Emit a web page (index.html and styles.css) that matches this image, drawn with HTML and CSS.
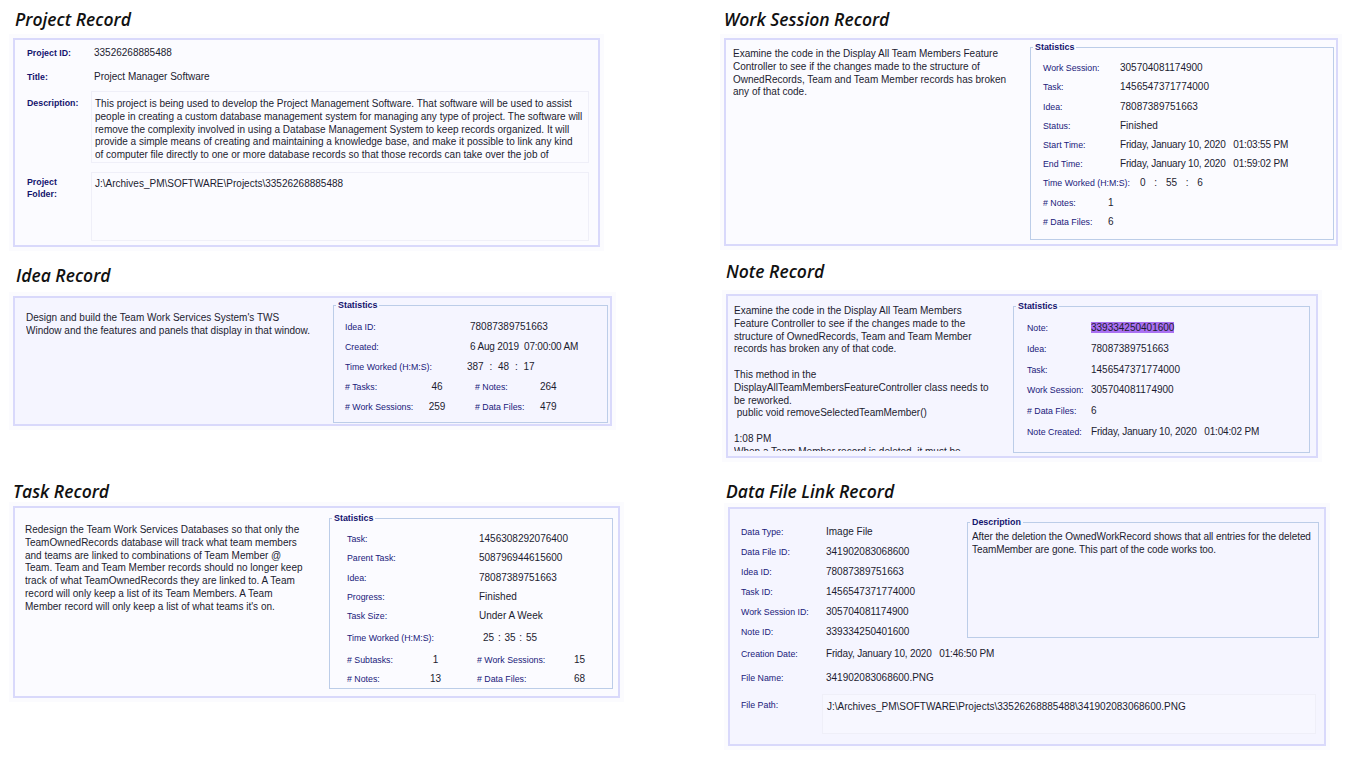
FILE: index.html
```html
<!DOCTYPE html>
<html lang="en">
  <head>
    <meta charset="UTF-8" />
    <title>Record Windows</title>
    <link rel="stylesheet" href="styles.css">
  </head>
  <body>
    <div class="sheet">
      <div class="col col-left">
        <section class="record rec-project">
          <h2>Project Record</h2>
          <div class="panel">
            <div class="pair pair-id"><span class="lbl-bold">Project ID:</span><span>33526268885488</span></div>
            <div class="pair pair-title"><span class="lbl-bold">Title:</span><span>Project Manager Software</span></div>
            <div class="pair pair-box pair-desc">
              <span class="lbl-bold">Description:</span>
              <div class="box box-desc">This project is being used to develop the Project Management Software. That software will be used to assist people in creating a custom database management system for managing any type of project. The software will remove the complexity involved in using a Database Management System to keep records organized. It will provide a simple means of creating and maintaining a knowledge base, and make it possible to link any kind of computer file directly to one or more database records so that those records can take over the job of</div>
            </div>
            <div class="pair pair-box pair-folder">
              <span class="lbl-bold">Project<br>Folder:</span>
              <div class="box box-folder">J:\Archives_PM\SOFTWARE\Projects\33526268885488</div>
            </div>
          </div>
        </section>

        <section class="record rec-idea">
          <h2>Idea Record</h2>
          <div class="panel split">
            <p class="body-text">Design and build the Team Work Services System's TWS Window and the features and panels that display in that window.</p>
            <fieldset class="stats">
              <legend>Statistics</legend>
              <div class="row"><span class="lbl">Idea ID:</span><span>78087389751663</span></div>
              <div class="row"><span class="lbl">Created:</span><span class="date">6 Aug 2019&nbsp; 07:00:00 AM</span></div>
              <div class="row"><span class="lbl">Time Worked (H:M:S):</span><span class="hms">387 : 48 : 17</span></div>
              <div class="row row-pair"><span class="lbl"># Tasks:</span><span class="num">46</span><span class="lbl lbl-two"># Notes:</span><span>264</span></div>
              <div class="row row-pair"><span class="lbl"># Work Sessions:</span><span class="num">259</span><span class="lbl lbl-two"># Data Files:</span><span>479</span></div>
            </fieldset>
          </div>
        </section>

        <section class="record rec-task">
          <h2>Task Record</h2>
          <div class="panel split">
            <p class="body-text">Redesign the Team Work Services Databases so that only the TeamOwnedRecords database will track what team members and teams are linked to combinations of Team Member @ Team. Team and Team Member records should no longer keep track of what TeamOwnedRecords they are linked to. A Team record will only keep a list of its Team Members. A Team Member record will only keep a list of what teams it's on.</p>
            <fieldset class="stats">
              <legend>Statistics</legend>
              <div class="row"><span class="lbl">Task:</span><span>1456308292076400</span></div>
              <div class="row"><span class="lbl">Parent Task:</span><span>508796944615600</span></div>
              <div class="row"><span class="lbl">Idea:</span><span>78087389751663</span></div>
              <div class="row"><span class="lbl">Progress:</span><span>Finished</span></div>
              <div class="row"><span class="lbl">Task Size:</span><span>Under A Week</span></div>
              <div class="row row-tall"><span class="lbl">Time Worked (H:M:S):</span><span class="hms">25 : 35 : 55</span></div>
              <div class="row row-pair row-tall"><span class="lbl"># Subtasks:</span><span class="num">1</span><span class="lbl lbl-two"># Work Sessions:</span><span>15</span></div>
              <div class="row row-pair"><span class="lbl"># Notes:</span><span class="num">13</span><span class="lbl lbl-two"># Data Files:</span><span>68</span></div>
            </fieldset>
          </div>
        </section>
      </div>

      <div class="col col-right">
        <section class="record rec-session">
          <h2>Work Session Record</h2>
          <div class="panel split">
            <p class="body-text">Examine the code in the Display All Team Members Feature Controller to see if the changes made to the structure of OwnedRecords, Team and Team Member records has broken any of that code.</p>
            <fieldset class="stats">
              <legend>Statistics</legend>
              <div class="row"><span class="lbl">Work Session:</span><span>305704081174900</span></div>
              <div class="row"><span class="lbl">Task:</span><span>1456547371774000</span></div>
              <div class="row"><span class="lbl">Idea:</span><span>78087389751663</span></div>
              <div class="row"><span class="lbl">Status:</span><span>Finished</span></div>
              <div class="row"><span class="lbl">Start Time:</span><span class="date">Friday, January 10, 2020&nbsp;&nbsp; 01:03:55 PM</span></div>
              <div class="row"><span class="lbl">End Time:</span><span class="date">Friday, January 10, 2020&nbsp;&nbsp; 01:59:02 PM</span></div>
              <div class="row"><span class="lbl">Time Worked (H:M:S):</span><span class="hms">0 : 55 : 6</span></div>
              <div class="row row-short"><span class="lbl"># Notes:</span><span>1</span></div>
              <div class="row row-short"><span class="lbl"># Data Files:</span><span>6</span></div>
            </fieldset>
          </div>
        </section>

        <section class="record rec-note">
          <h2>Note Record</h2>
          <div class="panel split">
            <p class="body-text">Examine the code in the Display All Team Members Feature Controller to see if the changes made to the structure of OwnedRecords, Team and Team Member records has broken any of that code.<br><br>This method in the DisplayAllTeamMembersFeatureController class needs to be reworked.<br>&nbsp;public void removeSelectedTeamMember()<br><br>1:08 PM<br>When a Team Member record is deleted, it must be</p>
            <fieldset class="stats">
              <legend>Statistics</legend>
              <div class="row"><span class="lbl">Note:</span><span><span class="picked">339334250401600</span></span></div>
              <div class="row"><span class="lbl">Idea:</span><span>78087389751663</span></div>
              <div class="row"><span class="lbl">Task:</span><span>1456547371774000</span></div>
              <div class="row"><span class="lbl">Work Session:</span><span>305704081174900</span></div>
              <div class="row"><span class="lbl"># Data Files:</span><span>6</span></div>
              <div class="row"><span class="lbl">Note Created:</span><span class="date">Friday, January 10, 2020&nbsp;&nbsp; 01:04:02 PM</span></div>
            </fieldset>
          </div>
        </section>

        <section class="record rec-file">
          <h2>Data File Link Record</h2>
          <div class="panel">
            <div class="file-top">
              <div class="file-rows">
                <div class="row"><span class="lbl">Data Type:</span><span>Image File</span></div>
                <div class="row"><span class="lbl">Data File ID:</span><span>341902083068600</span></div>
                <div class="row"><span class="lbl">Idea ID:</span><span>78087389751663</span></div>
                <div class="row"><span class="lbl">Task ID:</span><span>1456547371774000</span></div>
                <div class="row"><span class="lbl">Work Session ID:</span><span>305704081174900</span></div>
                <div class="row"><span class="lbl">Note ID:</span><span>339334250401600</span></div>
              </div>
              <fieldset class="stats">
                <legend>Description</legend>
                <p class="body-text">After the deletion the OwnedWorkRecord shows that all entries for the deleted TeamMember are gone. This part of the code works too.</p>
              </fieldset>
            </div>
            <div class="row row-date"><span class="lbl">Creation Date:</span><span class="date">Friday, January 10, 2020&nbsp;&nbsp; 01:46:50 PM</span></div>
            <div class="row row-name"><span class="lbl">File Name:</span><span>341902083068600.PNG</span></div>
            <div class="row-path">
              <span class="lbl">File Path:</span>
              <div class="box box-path">J:\Archives_PM\SOFTWARE\Projects\33526268885488\341902083068600.PNG</div>
            </div>
          </div>
        </section>
      </div>
    </div>
  </body>
</html>
```

FILE: styles.css
```css
* {
  box-sizing: border-box;
}

body {
  margin: 0;
  background: #fff;
  color: #1c1c30;
  font-family: "Liberation Sans", Arial, sans-serif;
  font-size: 10px;
  line-height: 12.8px;
}

.sheet {
  display: flex;
  width: 1348px;
  height: 764px;
  overflow: hidden;
}

.col-left {
  width: 724px;
  padding-left: 13px;
}

.col-right {
  width: 624px;
}

h2 {
  height: 20px;
  margin: 0;
  color: #111;
  font-family: "Open Sans", sans-serif;
  font-size: 17.5px;
  font-style: italic;
  font-weight: 600;
  line-height: 20px;
}

.panel {
  border: 2px solid #d9d9fb;
  background: #f8f8ff;
  box-shadow: 0 0 0 4px #fbfbfe;
}

.split {
  display: flex;
  align-items: flex-start;
  justify-content: space-between;
}

.body-text {
  margin: 0;
  overflow: hidden;
}

.stats {
  margin: 0;
  padding: 0;
  border: 1px solid #bccde8;
  flex: none;
}

legend {
  margin-left: 2px;
  padding: 0 2px;
  color: #14146e;
  font-size: 8.9px;
  font-weight: bold;
  line-height: 12px;
}

.lbl,
.lbl-bold {
  color: #20207a;
  font-size: 8.8px;
  white-space: nowrap;
}

.lbl-bold {
  color: #14146e;
  font-weight: bold;
}

.row {
  display: grid;
  align-items: center;
  white-space: nowrap;
}

.date {
  letter-spacing: -0.18px;
}

.box {
  border: 1px solid #efeff8;
  background: #fbfbff;
  overflow: hidden;
}

/* project */
.rec-project h2 {
  margin: 9px 0 9px 2px;
}

.rec-project .panel {
  width: 587px;
  height: 209px;
  padding: 0 4px 0 12px;
  background: #fbfbff;
}

.pair {
  display: grid;
  grid-template-columns: 67px 1fr;
  white-space: normal;
}

.pair-id {
  height: 25px;
  padding-top: 7px;
}

.pair-title {
  height: 26px;
  padding-top: 6px;
}

.pair-box {
  grid-template-columns: 64px 498px;
}

.pair-desc {
  height: 81px;
}

.pair-desc .lbl-bold {
  padding-top: 6px;
}

.box-desc {
  height: 72px;
  padding: 6px 5px 6px 3px;
}

.pair-folder .lbl-bold {
  line-height: 12px;
  padding-top: 4px;
}

.box-folder {
  height: 69px;
  padding: 5px 3px;
}

/* idea */
.rec-idea h2 {
  margin: 18px 0 11px 3px;
}

.rec-idea .panel {
  width: 599px;
  height: 130px;
  padding: 1px 2px 0 11px;
  background: #f5f5ff;
}

.rec-idea .body-text {
  width: 288px;
  margin-top: 13px;
}

.rec-idea .stats {
  width: 275px;
  height: 124px;
  padding: 6px 0 0 0;
  background: #f5f5ff;
}

.rec-idea .row {
  height: 20px;
  margin-left: 11px;
  grid-template-columns: 125px 1fr;
}

.rec-idea .hms {
  margin-left: -3px;
  word-spacing: 3px;
}

.rec-idea .row-pair {
  grid-template-columns: 78px 28px 89px 1fr;
}

.rec-idea .lbl-two {
  padding-left: 24px;
}

.num {
  text-align: center;
}

/* task */
.rec-task h2 {
  margin: 55px 0 5px 0;
}

.rec-task .panel {
  width: 607px;
  height: 192px;
  padding: 4px 5px 0 10px;
  background: #fbfbff;
}

.rec-task .body-text {
  width: 279px;
  margin-top: 12px;
}

.rec-task .stats {
  width: 284px;
  height: 177px;
  padding: 6px 0 0 0;
  background: #fbfbff;
}

.rec-task .row {
  height: 19.2px;
  margin-left: 17px;
  grid-template-columns: 132px 1fr;
}

.rec-task .row-tall {
  margin-top: 2.8px;
}

.rec-task .hms {
  padding-left: 4px;
  word-spacing: 1px;
}

.rec-task .row-pair {
  grid-template-columns: 80px 17px 130px 1fr;
}

.rec-task .lbl-two {
  padding-left: 33px;
}

/* work session */
.rec-session h2 {
  margin: 9px 0 9px 0;
}

.rec-session .panel {
  width: 614px;
  height: 208px;
  padding: 1px 2px 0 7px;
  background: #fbfbff;
}

.rec-session .body-text {
  width: 285px;
  margin-top: 7px;
}

.rec-session .stats {
  width: 304px;
  height: 199px;
  padding: 6px 0 0 0;
  background: #fbfbff;
}

.rec-session .row {
  height: 19.2px;
  margin-left: 12px;
  grid-template-columns: 77px 1fr;
}

.rec-session .hms {
  margin-left: 20px;
  word-spacing: 6px;
}

.rec-session .row-short {
  grid-template-columns: 65px 1fr;
}

/* note */
.rec-note h2 {
  margin: 15px 0 13px 2px;
}

.rec-note .panel {
  width: 592px;
  height: 164px;
  margin-left: 2px;
  padding: 4px 6px 0 6px;
  background: #f5f5ff;
}

.rec-note .body-text {
  width: 258px;
  height: 146px;
  margin-top: 5px;
}

.rec-note .stats {
  width: 297px;
  height: 153px;
  padding: 6px 0 0 0;
  background: #f5f5ff;
}

.rec-note .row {
  height: 20.8px;
  margin-left: 13px;
  grid-template-columns: 64px 1fr;
}

.picked {
  background: #a970f2;
}

/* data file */
.rec-file h2 {
  margin: 23px 0 6px 2px;
}

.rec-file .panel {
  width: 598px;
  height: 239px;
  margin-left: 4px;
  padding: 7px 5px 0 11px;
  background: #f5f5ff;
}

.file-top {
  display: flex;
  justify-content: space-between;
  align-items: flex-start;
  height: 126px;
}

.file-rows {
  padding-top: 6px;
}

.file-rows .row {
  height: 20px;
  grid-template-columns: 85px 1fr;
}

.rec-file .stats {
  width: 352px;
  height: 122px;
  padding: 3px 0 0 0;
  background: #f5f5ff;
}

.rec-file .body-text {
  margin-left: 4px;
  letter-spacing: -0.08px;
}

.rec-file .row-date,
.rec-file .row-name {
  grid-template-columns: 85px 1fr;
}

.rec-file .row-date {
  height: 20px;
  margin-top: 2px;
}

.rec-file .row-name {
  height: 20px;
  margin-top: 4px;
}

.row-path {
  display: grid;
  grid-template-columns: 81px 494px;
  margin-top: 6px;
}

.row-path .lbl {
  padding-top: 5px;
}

.box-path {
  height: 40px;
  padding: 6px 4px;
  background: #f7f7ff;
}
```
